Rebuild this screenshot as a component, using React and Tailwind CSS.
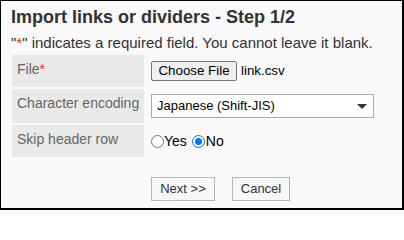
import React from "react";

export default function App() {
  const font = { fontFamily: '"Liberation Sans", Arial, sans-serif' };
  return (
    <div
      className="w-[404px] h-[210px] bg-[#f9f9f9] border-t border-l border-r-2 border-b-2 border-black text-[#333] overflow-hidden"
      style={font}
    >
      <div className="pl-[10px] pt-[6px]">
        <h1 className="text-[18px] leading-[20px] font-bold text-[#333]">
          Import links or dividers - Step 1/2
        </h1>
        <p className="mt-[7px] text-[15px] leading-[17px] text-[#333]">
          "<span className="text-[#e5322d]">*</span>" indicates a required field. You cannot leave it blank.
        </p>
      </div>
      <div className="ml-[11px] mt-[4px] grid grid-cols-[132px_1fr] gap-y-[2px] w-[372px]">
        <div className="h-[32px] bg-[#e9e9e9] pl-[5px] pt-[6px] text-[14px] leading-[17px] text-[#666]">
          File<span className="text-[#e5322d]">*</span>
        </div>
        <div className="h-[32px] pl-[7px] flex items-center gap-[4px]">
          <button className="h-[20px] w-[86px] bg-[#efefef] border border-[#767676] rounded-[2px] text-[13.33px] leading-[16px] text-black">
            Choose File
          </button>
          <span className="text-[13.33px] text-black">link.csv</span>
        </div>

        <div className="h-[34px] bg-[#e9e9e9] pl-[5px] pt-[6px] text-[14px] leading-[17px] text-[#666]">
          Character encoding
        </div>
        <div className="h-[34px] pl-[7px] flex items-center">
          <div className="h-[24px] w-[223px] bg-white border border-[#a9a9a9] flex items-center justify-between pl-[5px] pr-[6px]">
            <span className="text-[13px] leading-[16px] text-black">Japanese (Shift-JIS)</span>
            <svg width="10" height="5" viewBox="0 0 10 5">
              <polygon points="0,0 10,0 5,5" fill="#333" />
            </svg>
          </div>
        </div>

        <div className="h-[32px] bg-[#e9e9e9] pl-[5px] pt-[6px] text-[14px] leading-[17px] text-[#666]">
          Skip header row
        </div>
        <div className="h-[32px] pl-[7px] flex items-center text-[14px] text-black">
          <span className="w-[13px] h-[13px] rounded-full border border-[#767676] bg-white inline-block" />
          <span className="ml-[0px]">Yes</span>
          <span className="ml-[5px] w-[13px] h-[13px] rounded-full border-[1.5px] border-[#0075ff] bg-white inline-flex items-center justify-center">
            <span className="w-[7px] h-[7px] rounded-full bg-[#0075ff]" />
          </span>
          <span className="ml-[1px]">No</span>
        </div>
      </div>
      <div className="ml-[150px] mt-[20px] flex gap-[17px]">
        <button className="h-[24px] w-[64px] bg-[#f7f7f7] border border-[#b5b5b5] text-[13px] text-[#333]">
          Next &gt;&gt;
        </button>
        <button className="h-[24px] w-[58px] bg-[#f7f7f7] border border-[#b5b5b5] text-[13px] text-[#333]">
          Cancel
        </button>
      </div>
    </div>
  );
}
